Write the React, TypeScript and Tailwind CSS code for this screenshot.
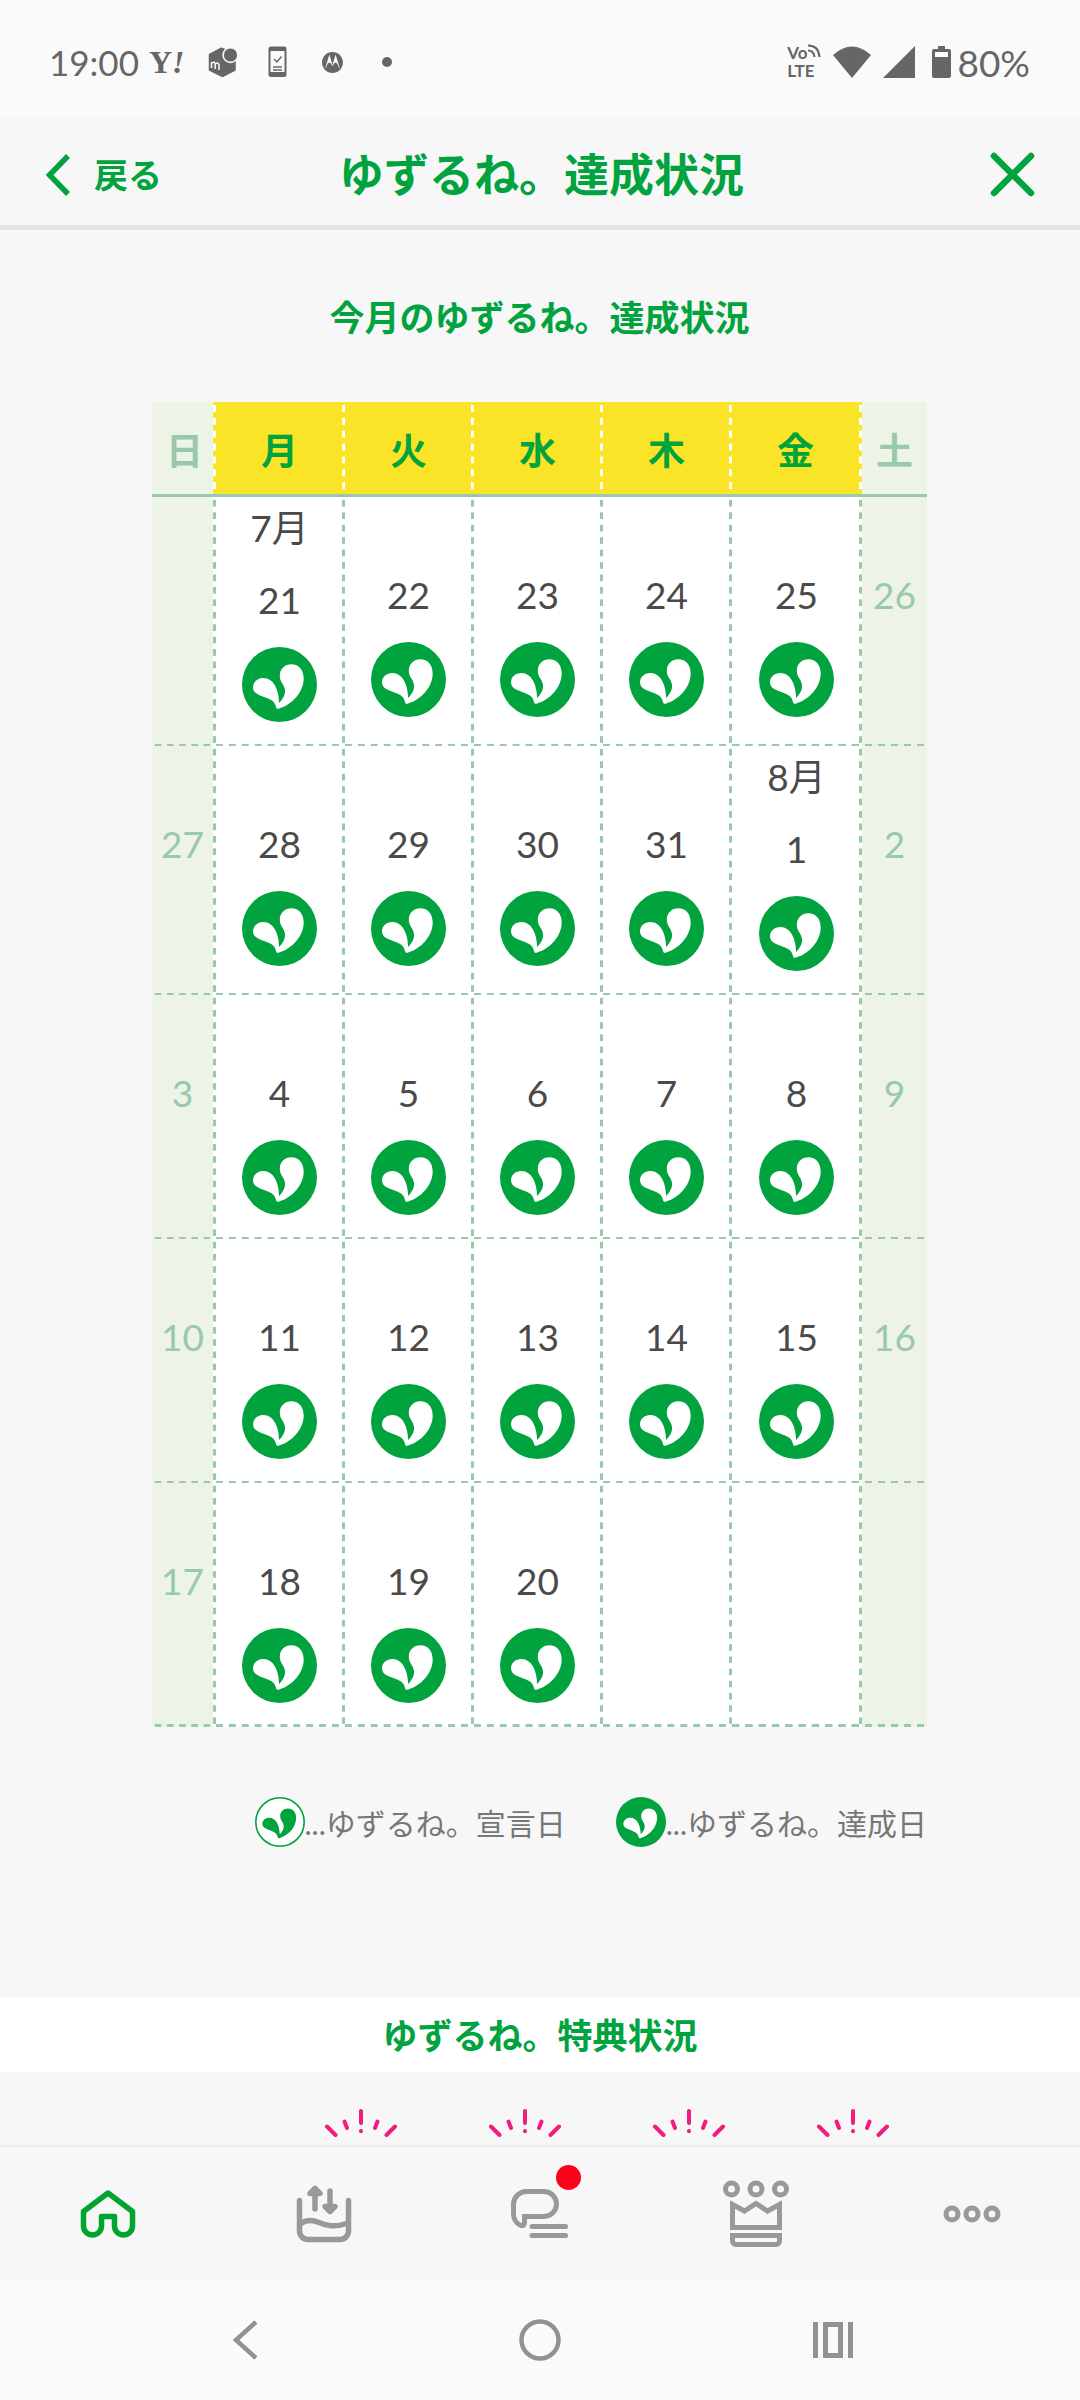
import clsx from "clsx";
import type { ReactNode } from "react";
import { SiMotorola } from "react-icons/si";

type Day = { date: number; month?: string } | null;

const WEEKDAYS = ["日", "月", "火", "水", "木", "金", "土"];

const WEEKS: Day[][] = [
  [null, { date: 21, month: "7月" }, { date: 22 }, { date: 23 }, { date: 24 }, { date: 25 }, { date: 26 }],
  [{ date: 27 }, { date: 28 }, { date: 29 }, { date: 30 }, { date: 31 }, { date: 1, month: "8月" }, { date: 2 }],
  [{ date: 3 }, { date: 4 }, { date: 5 }, { date: 6 }, { date: 7 }, { date: 8 }, { date: 9 }],
  [{ date: 10 }, { date: 11 }, { date: 12 }, { date: 13 }, { date: 14 }, { date: 15 }, { date: 16 }],
  [{ date: 17 }, { date: 18 }, { date: 19 }, { date: 20 }, null, null, null],
];

// Dashed rules are tiled gradients so the dash rhythm restarts in every cell
const CELL = {
  head: "bg-[#fae428] text-[#00a33e] [background-image:linear-gradient(transparent_20%,#fff_20%_80%,transparent_80%)] [background-size:3px_14%] [background-position:left_top] [background-repeat:repeat-y]",
  headLast:
    "bg-[#fae428] text-[#00a33e] [background-image:linear-gradient(transparent_20%,#fff_20%_80%,transparent_80%),linear-gradient(transparent_20%,#fff_20%_80%,transparent_80%)] [background-size:3px_14%,3px_14%] [background-position:left_top,right_top] [background-repeat:repeat-y,repeat-y]",
  side: "bg-[#edf3e7] text-[#99c9ac] [background-image:linear-gradient(90deg,transparent_20%,#99c9ac_20%_80%,transparent_80%)] [background-position:left_bottom] [background-repeat:repeat-x]",
  day: "bg-white [background-image:linear-gradient(transparent_20%,#99c9ac_20%_80%,transparent_80%),linear-gradient(90deg,transparent_20%,#99c9ac_20%_80%,transparent_80%)] [background-position:left_top,left_bottom] [background-repeat:repeat-y,repeat-x]",
  dayLast:
    "bg-white [background-image:linear-gradient(transparent_20%,#99c9ac_20%_80%,transparent_80%),linear-gradient(90deg,transparent_20%,#99c9ac_20%_80%,transparent_80%),linear-gradient(transparent_20%,#99c9ac_20%_80%,transparent_80%)] [background-position:left_top,left_bottom,right_top] [background-repeat:repeat-y,repeat-x,repeat-y]",
};

function bodyCellClass(col: number, lastRow: boolean) {
  if (col === 0 || col === 6) {
    return clsx(CELL.side, lastRow ? "[background-size:20%_3px]" : "[background-size:20%_2px]");
  }
  if (col === 5) {
    return clsx(
      CELL.dayLast,
      lastRow
        ? "[background-size:3px_5%,10%_3px,3px_5%]"
        : "[background-size:3px_5%,10%_2px,3px_5%]",
    );
  }
  return clsx(
    CELL.day,
    lastRow ? "[background-size:3px_5%,10%_3px]" : "[background-size:3px_5%,10%_2px]",
  );
}

function LeafMark({ outlined = false, className }: { outlined?: boolean; className?: string }) {
  return (
    <svg viewBox="0 0 75 75" className={className} aria-hidden="true">
      {outlined ? (
        <circle cx="37.5" cy="37.5" r="36.3" fill="#fff" stroke="#00a33e" strokeWidth="2.4" />
      ) : (
        <circle cx="37.5" cy="37.5" r="37.5" fill="#00a33e" />
      )}
      <path
        fill={outlined ? "#00a33e" : "#fff"}
        d="M34.5 61.2C33 57.5 33.3 54.3 25.5 51.2C18.5 48.4 11 47 11 40.3C11 35 15.5 31 21.3 31C32 31 37 43.5 37.1 56C41 52 43.6 47.5 43 43C42.3 37 37.8 35.5 37.8 28.5C37.8 22 43 17.3 49.3 17.3C57 17.3 61.7 23 61.7 31.5C61.7 45 50 57.8 37.3 61.4C36 61.8 35 61.9 34.5 61.2Z"
      />
    </svg>
  );
}

function Sparkle() {
  return (
    <svg
      viewBox="0 0 74 28"
      className="h-7 w-[74px]"
      stroke="#f01d7f"
      strokeWidth="4"
      strokeLinecap="round"
      aria-hidden="true"
    >
      <path d="M37 2V14M37 22V22.2M20.5 12.5L23 19M53.5 12.5L51 19M3 17.5L11.5 26M71 17.5L62.5 26" />
    </svg>
  );
}

function StatusBar() {
  return (
    <div className="flex h-[116px] items-center bg-[#fafafa] pt-2 pr-[50px] pl-[49px] text-[35px] leading-none text-[#666]">
      <span>19:00</span>
      <span className="ml-2.5 w-[38px] font-['Liberation_Serif',serif] text-[32px] font-bold">
        Y<i>!</i>
      </span>
      <svg viewBox="0 0 30 30" className="ml-[21px] size-[30px]" aria-hidden="true">
        <path
          d="M13.5 1.2L1.5 7.5V23L14.5 29.5L27 23V7Z"
          fill="#666"
          stroke="#666"
          strokeWidth="1.5"
          strokeLinejoin="round"
        />
        <circle cx="22.5" cy="8" r="7.4" fill="#666" stroke="#fafafa" strokeWidth="1.6" />
        <path
          d="M3.5 21V15M3.5 17Q5.5 13.5 7.2 16.5V22M7.2 17.5Q9.5 14.5 11 17.5V23"
          fill="none"
          stroke="#fafafa"
          strokeWidth="1.5"
        />
      </svg>
      <svg viewBox="0 0 20 32" className="ml-[30px] h-8 w-5" fill="none" aria-hidden="true">
        <rect x="1.5" y="1.5" width="16" height="28.5" rx="1.5" stroke="#666" strokeWidth="2" />
        <path d="M1 3H18M1 28H18" stroke="#666" strokeWidth="4" />
        <path d="M6 13L9 16L13.5 10.5M5 21H14M5 24H14" stroke="#666" strokeWidth="1.4" />
      </svg>
      <SiMotorola className="ml-[34px] size-[21px]" />
      <span className="ml-[39px] size-[10px] rounded-full bg-[#666]" />

      <span className="ml-auto flex flex-col text-[17px] leading-[18px] font-bold">
        <span className="flex">
          Vo
          <svg viewBox="0 0 14 14" className="size-[14px]" fill="none" aria-hidden="true">
            <path
              d="M1 1.5C8 1.5 12 6 12.5 13M1 6.5C5 6.5 7 9 7.5 13"
              stroke="#666"
              strokeWidth="2"
            />
          </svg>
        </span>
        <span>LTE</span>
      </span>
      <svg viewBox="0 0 38 32" className="ml-3 h-8 w-[38px]" fill="#666" aria-hidden="true">
        <path d="M0 9Q19 -8 38 9L19 32Z" />
      </svg>
      <svg viewBox="0 0 32 32" className="ml-3 size-8" fill="#666" aria-hidden="true">
        <path d="M32 0V32H0Z" />
      </svg>
      <svg viewBox="0 0 19 32" className="ml-[17px] h-8 w-[19px]" aria-hidden="true">
        <path
          d="M6 0H13V3H17Q19 3 19 5V30Q19 32 17 32H2Q0 32 0 30V5Q0 3 2 3H6Z"
          fill="#666"
        />
        <rect x="3" y="6" width="13" height="5" fill="#fff" />
      </svg>
      <span className="ml-1.5 text-[37px]">80%</span>
    </div>
  );
}

function Header() {
  return (
    <header className="grid h-[114px] grid-cols-[1fr_auto_1fr] items-center border-b-[5px] border-[#e4e5e5] pt-2 pr-[45px] pl-[46px] text-[#00a33e]">
      <button type="button" className="flex items-center gap-6 text-[34px] leading-none font-bold">
        <svg viewBox="0 0 24 42" className="h-[42px] w-6" fill="none" aria-hidden="true">
          <path d="M22 2L3.5 21L22 40" stroke="currentColor" strokeWidth="5.5" />
        </svg>
        戻る
      </button>
      <h1 className="pt-0.5 pl-0.5 text-[45px] leading-none font-bold">ゆずるね。達成状況</h1>
      <button type="button" aria-label="閉じる" className="justify-self-end">
        <svg viewBox="0 0 45 45" className="size-[45px]" aria-hidden="true">
          <path
            d="M4 4L41 41M41 4L4 41"
            stroke="currentColor"
            strokeWidth="6.5"
            strokeLinecap="round"
          />
        </svg>
      </button>
    </header>
  );
}

function DayCell({ day, weekend }: { day: Day; weekend: boolean }) {
  if (!day) return null;
  return (
    <>
      {day.month ? (
        <div className="h-[60px] leading-[61px]">{day.month}</div>
      ) : (
        <div className="h-[55px]" />
      )}
      <div className="h-[90px] leading-[86px]">{day.date}</div>
      {!weekend && <LeafMark className="mx-auto mb-6 block size-[75px]" />}
    </>
  );
}

function Calendar() {
  return (
    <table className="w-full table-fixed border-separate border-spacing-0 text-center text-[37px] text-[#4a4a4a]">
      <colgroup>
        <col className="w-[61px]" />
        <col />
        <col />
        <col />
        <col />
        <col className="w-[133px]" />
        <col className="w-[65px]" />
      </colgroup>
      <thead>
        <tr>
          {WEEKDAYS.map((name, col) => (
            <th
              key={name}
              scope="col"
              className={clsx(
                "h-[95px] border-b-[3px] border-[#99c9ac] p-0 pt-1 leading-none font-bold",
                col < 5 && "pl-1",
                (col === 0 || col === 6) && "bg-[#edf3e7] text-[#99c9ac]",
                col === 5 && CELL.headLast,
                col > 0 && col < 5 && CELL.head,
              )}
            >
              {name}
            </th>
          ))}
        </tr>
      </thead>
      <tbody>
        {WEEKS.map((week, row) => (
          <tr key={row}>
            {week.map((day, col) => (
              <td
                key={col}
                className={clsx(
                  "p-0 align-top",
                  col > 0 && col < 5 && "pl-1",
                  col === 5 && "pl-0.5",
                  bodyCellClass(col, row === WEEKS.length - 1),
                )}
              >
                <DayCell day={day} weekend={col === 0 || col === 6} />
              </td>
            ))}
          </tr>
        ))}
      </tbody>
    </table>
  );
}

function Legend() {
  return (
    <ul className="mt-[70px] flex justify-end gap-[50px] text-[30px] leading-[52px] text-[#777]">
      <li className="flex">
        <LeafMark outlined className="size-[50px]" />
        ...ゆずるね。宣言日
      </li>
      <li className="flex">
        <LeafMark className="size-[50px]" />
        ...ゆずるね。達成日
      </li>
    </ul>
  );
}

function Tab({ label, active, children }: { label: string; active?: boolean; children: ReactNode }) {
  return (
    <a
      href="#"
      aria-label={label}
      className={clsx(
        "relative flex flex-1 items-center justify-center",
        active ? "text-[#00a42e]" : "text-[#999]",
      )}
    >
      {children}
    </a>
  );
}

function TabBar() {
  return (
    <nav className="flex h-[135px] border-t-2 border-[#ebebeb] bg-[#f7f7f7]">
      <Tab label="ホーム" active>
        <svg
          viewBox="0 0 56 50"
          className="h-[50px] w-14"
          fill="none"
          stroke="currentColor"
          strokeWidth="5.5"
          strokeLinejoin="round"
          aria-hidden="true"
        >
          <path d="M28 4L3.5 22.5V37A9 9 0 0 0 21.5 37V27.5H34.5V37A9 9 0 0 0 52.5 37V22.5Z" />
        </svg>
      </Tab>
      <Tab label="データ残量">
        <svg
          viewBox="0 0 56 58"
          className="h-[58px] w-14"
          fill="none"
          stroke="currentColor"
          strokeWidth="5.5"
          strokeLinecap="round"
          strokeLinejoin="round"
          aria-hidden="true"
        >
          <path d="M3.5 15.5V46a8.5 8.5 0 0 0 8.5 8.5h32a8.5 8.5 0 0 0 8.5-8.5V15.5" />
          <path d="M4 39C10 34.5 16 34.5 23 37.5S38 43 52 38" />
          <path d="M19 24V4M34 6V26" />
          <path d="M14 8.5L19 3.5L24 8.5ZM29 21.5L34 26.5L39 21.5Z" fill="currentColor" />
        </svg>
      </Tab>
      <Tab label="お知らせ">
        <svg
          viewBox="0 0 58 50"
          className="h-[50px] w-[58px]"
          fill="none"
          stroke="currentColor"
          strokeWidth="5"
          strokeLinecap="round"
          aria-hidden="true"
        >
          <path d="M13.5 27.5H33A12.5 12.5 0 0 0 33 2.5H16A13 13 0 0 0 2.5 15V25C2.5 31 6.5 35 10 36.5Q13.5 37 13.5 34Z" />
          <path d="M21 37.5H54.5M21 46.5H54.5" />
        </svg>
        <span className="absolute top-[18px] left-1/2 ml-4 size-[25px] rounded-full bg-[#ff001b]" />
      </Tab>
      <Tab label="特典">
        <svg
          viewBox="0 0 68 68"
          className="size-[68px]"
          fill="none"
          stroke="currentColor"
          strokeWidth="5"
          aria-hidden="true"
        >
          <circle cx="9.5" cy="9" r="6" />
          <circle cx="34" cy="9" r="6" />
          <circle cx="58.5" cy="9" r="6" />
          <path d="M10.5 24.5L22.5 31L34 23.5L45.5 31L57.5 24.5V47.5H10.5Z" />
          <path d="M10.5 55.5H57.5V61A3.5 3.5 0 0 1 54 64.5H14A3.5 3.5 0 0 1 10.5 61Z" />
        </svg>
      </Tab>
      <Tab label="その他">
        <svg
          viewBox="0 0 58 18"
          className="h-[18px] w-[58px]"
          fill="none"
          stroke="currentColor"
          strokeWidth="5"
          aria-hidden="true"
        >
          <circle cx="9" cy="9" r="6" />
          <circle cx="29" cy="9" r="6" />
          <circle cx="49" cy="9" r="6" />
        </svg>
      </Tab>
    </nav>
  );
}

function SystemNav() {
  return (
    <div className="flex h-[120px] items-center justify-between bg-[#fafafa] px-[21%] text-[#929292]">
      <button type="button" aria-label="戻る">
        <svg viewBox="0 0 40 40" className="size-10" fill="none" aria-hidden="true">
          <path d="M29 2L9 20L29 38" stroke="currentColor" strokeWidth="4.5" />
        </svg>
      </button>
      <button type="button" aria-label="ホーム画面">
        <svg viewBox="0 0 42 42" className="size-[42px]" fill="none" aria-hidden="true">
          <circle cx="21" cy="21" r="18.5" stroke="currentColor" strokeWidth="4.5" />
        </svg>
      </button>
      <button type="button" aria-label="最近使ったアプリ">
        <svg viewBox="0 0 40 36" className="h-9 w-10" fill="none" aria-hidden="true">
          <path d="M2.5 0V36M37.5 0V36M12.5 2.5H27.5V33.5H12.5Z" stroke="currentColor" strokeWidth="5" />
        </svg>
      </button>
    </div>
  );
}

export default function App() {
  return (
    <div className="flex min-h-screen flex-col bg-[#f7f7f7] font-['Lato','Noto_Sans_CJK_JP',sans-serif]">
      <StatusBar />
      <Header />
      <main className="flex-1">
        <section className="pr-[153px] pl-[152px]">
          <h2 className="pt-[61px] pb-[59px] text-center text-[35px] leading-[52px] font-bold text-[#00a33e]">
            今月のゆずるね。達成状況
          </h2>
          <Calendar />
          <Legend />
        </section>
        <section className="mt-[148px]">
          <h2 className="bg-white pt-0.5 text-center text-[35px] leading-[73px] font-bold text-[#00a33e]">
            ゆずるね。特典状況
          </h2>
          <div className="flex justify-center gap-[90px] pt-[37px] pl-[134px]">
            <Sparkle />
            <Sparkle />
            <Sparkle />
            <Sparkle />
          </div>
        </section>
      </main>
      <TabBar />
      <SystemNav />
    </div>
  );
}
